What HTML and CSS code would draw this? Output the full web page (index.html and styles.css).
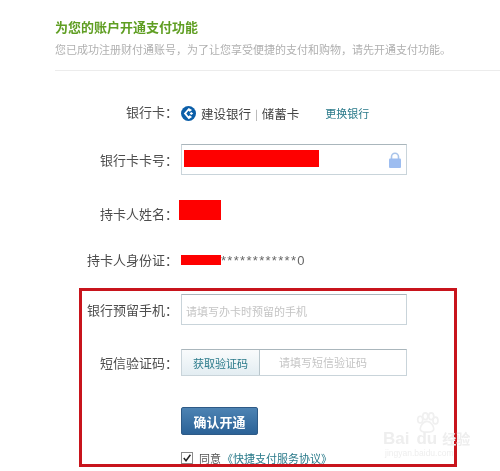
FILE: index.html
```html
<!DOCTYPE html>
<html lang="zh-CN">
<head>
<meta charset="utf-8">
<title>开通支付功能</title>
<link rel="stylesheet" href="styles.css">
</head>
<body>
<main class="page">
  <header class="intro">
    <h1 class="title">为您的账户开通支付功能</h1>
    <p class="desc">您已成功注册财付通账号，为了让您享受便捷的支付和购物，请先开通支付功能。</p>
  </header>
  <section class="form">
    <div class="row row-bank">
      <span class="label">银行卡：</span>
      <svg class="bank-logo" viewBox="0 0 16 16" aria-hidden="true">
        <circle cx="8" cy="8" r="8" fill="#0b5ea8"/>
        <path d="M11.8 4.2 L8.2 2 L3 8 L8.2 14 L11.8 11.8 L9.4 9.8 L7.9 10.9 L5.6 8 L7.9 5.1 L9.4 6.2 Z" fill="#fff"/>
        <path d="M9.2 8 L11 6.4 L13 8 L11 9.6 Z" fill="#fff"/>
      </svg>
      <span class="bank-name">建设银行</span>
      <span class="bank-sep">|</span>
      <span class="bank-name">储蓄卡</span>
      <a class="link change">更换银行</a>
    </div>
    <div class="row row-card">
      <span class="label">银行卡卡号：</span>
      <div class="field field-card">
        <span class="mask mask-card"></span>
        <svg class="lock" viewBox="0 0 12 16" aria-hidden="true">
          <path d="M2.5 7 V4.8 a3.5 3.5 0 0 1 7 0 V7" fill="none" stroke="#a9c4ea" stroke-width="1.6"/>
          <rect x="0" y="6.5" width="12" height="9.5" rx="1" fill="#9dbdf0"/>
        </svg>
      </div>
    </div>
    <div class="row row-name">
      <span class="label">持卡人姓名：</span>
      <span class="mask mask-name"></span>
    </div>
    <div class="row row-id">
      <span class="label">持卡人身份证：</span>
      <span class="id-value"><span class="mask mask-id"></span>************0</span>
    </div>
    <div class="highlight">
      <div class="row row-phone">
        <span class="label label-in">银行预留手机：</span>
        <div class="field field-phone"><span class="placeholder">请填写办卡时预留的手机</span></div>
      </div>
      <div class="row row-code">
        <span class="label label-in">短信验证码：</span>
        <div class="code-group">
          <button class="code-btn" type="button">获取验证码</button>
          <span class="code-input">请填写短信验证码</span>
        </div>
      </div>
      <button class="submit" type="button">确认开通</button>
      <div class="agree">
        <svg class="check" viewBox="0 0 12 12" aria-hidden="true">
          <rect x="0.5" y="0.5" width="11" height="11" fill="#fff" stroke="#8a8a8a"/>
          <path d="M2.8 6 L5 8.8 L9.4 2.8" fill="none" stroke="#222" stroke-width="1.5"/>
        </svg>
        <span class="agree-text">同意</span>
        <a class="link agree-link">《快捷支付服务协议》</a>
      </div>
    </div>
  </section>
  <aside class="watermark" aria-hidden="true">
    <svg class="paw" viewBox="0 0 30 26">
      <g fill="none" stroke="#f0f0f0" stroke-width="2">
        <ellipse cx="7" cy="9" rx="3" ry="4"/>
        <ellipse cx="13" cy="5" rx="3" ry="4"/>
        <ellipse cx="20" cy="5" rx="3" ry="4"/>
        <ellipse cx="25" cy="10" rx="3" ry="4"/>
        <path d="M15 11 C10 11 7 17 7 20 C7 25 23 25 23 20 C23 17 20 11 15 11 Z"/>
      </g>
    </svg>
    <div class="wm-main">Bai<span class="wm-du">du</span><span class="wm-cn">经验</span></div>
    <div class="wm-sub">jingyan.baidu.com</div>
  </aside>
</main>
</body>
</html>
```
FILE: styles.css
```css
* { box-sizing: border-box; }
html, body { margin: 0; padding: 0; }
body {
  width: 500px;
  height: 471px;
  overflow: hidden;
  background: #fff;
  color: #555;
  font-family: "Noto Sans CJK SC", "Liberation Sans", sans-serif;
  font-size: 13px;
}
.page {
  position: relative;
  width: 500px;
  height: 471px;
  overflow: hidden;
  filter: blur(0.3px);
}
.intro {
  margin-left: 55px;
  height: 71px;
  padding-top: 17px;
  border-bottom: 1px solid #ececec;
}
.title {
  margin: 0;
  font-size: 13px;
  line-height: 20px;
  font-weight: 700;
  color: #5f9e22;
}
.desc {
  margin: 3px 0 0;
  font-size: 11px;
  line-height: 18px;
  color: #b0b0b0;
}
.row {
  display: flex;
  align-items: center;
}
.label {
  flex: none;
  width: 178px;
  text-align: right;
  line-height: 20px;
  color: #4d4d4d;
}
.row-bank { margin-top: 31px; height: 20px; }
.bank-logo { width: 15px; height: 15px; margin: 2px 5px 0 3px; }
.bank-name { margin-top: 2px; font-size: 12.5px; color: #444; }
.bank-sep { margin: 2px 4px 0; color: #999; font-size: 10px; }
.link { color: #2a7a8a; }
.change { margin: 2px 0 0 26px; font-size: 11px; }
.row-card { margin-top: 22px; }
.field {
  width: 226px;
  height: 31px;
  margin-left: 3px;
  display: flex;
  align-items: center;
  border: 1px solid #c9d4da;
  border-top-color: #aab6bc;
  background: #fff;
}
.field-card { justify-content: space-between; padding: 0 5px 0 2px; }
.mask { display: block; background: #fe0000; }
.mask-card { width: 135px; height: 17px; margin-top: -3px; }
.lock { width: 12px; height: 16px; }
.row-name { margin-top: 27px; height: 24px; }
.mask-name { width: 42px; height: 20px; margin: -8px 0 0 1px; }
.row-id { margin-top: 22px; height: 24px; }
.id-value { display: flex; align-items: center; margin-left: 3px; font-family: "Liberation Sans", sans-serif; font-size: 13px; letter-spacing: 1.3px; color: #666; }
.mask-id { width: 40px; height: 10px; }
.highlight {
  position: relative;
  width: 378px;
  height: 179px;
  margin: 16px 0 0 79px;
  padding-top: 3px;
  border: 3px solid #c8141c;
}
.label-in { width: 96px; }
.row-phone .field { margin-left: 3px; }
.placeholder { margin: 2px 0 0 4px; font-size: 11px; color: #c4c4c4; }
.row-code { margin-top: 24px; }
.code-group {
  width: 226px;
  height: 27px;
  margin-left: 3px;
  display: flex;
  border: 1px solid #c9d4da;
  border-top-color: #aab6bc;
}
.code-btn {
  flex: none;
  width: 78px;
  margin: 0;
  padding: 0;
  border: 0;
  border-right: 1px solid #b9c6cc;
  background: linear-gradient(#f9fbfc, #e3edf2);
  color: #2a7a8a;
  font: inherit;
  font-size: 11px;
}
.code-input { flex: 1; padding-left: 19px; line-height: 24px; font-size: 11px; color: #c4c4c4; }
.submit {
  display: block;
  width: 77px;
  height: 28px;
  margin: 31px 0 0 99px;
  padding: 0;
  border: 1px solid #2e5a86;
  border-radius: 2px;
  background: linear-gradient(#4d83b3, #2b6297);
  color: #fff;
  font: inherit;
  font-size: 13px;
  font-weight: 700;
}
.agree {
  display: flex;
  align-items: center;
  margin: 15px 0 0 99px;
  font-size: 11px;
  line-height: 16px;
}
.check { width: 12px; height: 12px; margin-right: 6px; }
.agree-text { color: #555; margin-right: 1px; }
.watermark {
  position: absolute;
  left: 383px;
  top: 412px;
  width: 117px;
  color: #eeeeee;
  font-family: "Liberation Sans", "Noto Sans CJK SC", sans-serif;
}
.paw { display: block; width: 26px; height: 22px; margin-left: 31px; }
.wm-main { margin-top: -4px; font-size: 17px; line-height: 18px; font-weight: 700; white-space: nowrap; }
.wm-du { margin-left: 7px; }
.wm-cn { margin-left: 5px; font-size: 14px; }
.wm-sub { font-size: 8.5px; line-height: 10px; white-space: nowrap; margin: 0 0 0 2px; }
```
